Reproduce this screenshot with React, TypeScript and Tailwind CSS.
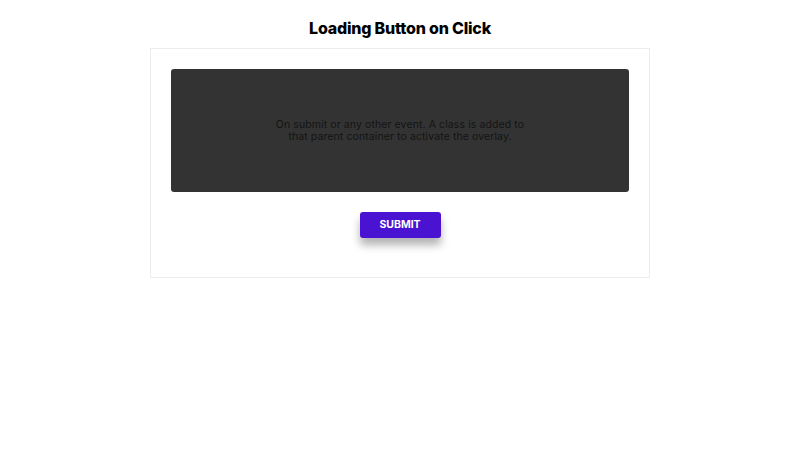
export default function App() {
  return (
    <div className="min-h-screen bg-white font-['Inter','Noto_Sans',sans-serif] text-black">
      <h1 className="pt-[18px] text-center text-[16px] font-extrabold leading-[21px] tracking-[-0.2px]">
        Loading Button on Click
      </h1>
      <div className="mx-auto mt-[9px] w-[500px] border border-[#ececec] px-[20px] pt-[20px] pb-[39px]">
        <div className="flex h-[123px] items-center justify-center rounded-[3px] bg-[#333333]">
          <p className="w-[252px] text-center text-[10.5px] leading-[11.5px] tracking-[0.1px] text-[#141414]">
            On submit or any other event. A class is added to that parent container to activate the overlay.
          </p>
        </div>
        <div className="mt-[20px] flex justify-center">
          <button className="h-[26px] w-[81px] rounded-[3px] bg-[#4a12d1] text-[10.5px] font-bold text-white shadow-[0_7px_8px_rgba(0,0,0,0.3)]">
            SUBMIT
          </button>
        </div>
      </div>
    </div>
  );
}
